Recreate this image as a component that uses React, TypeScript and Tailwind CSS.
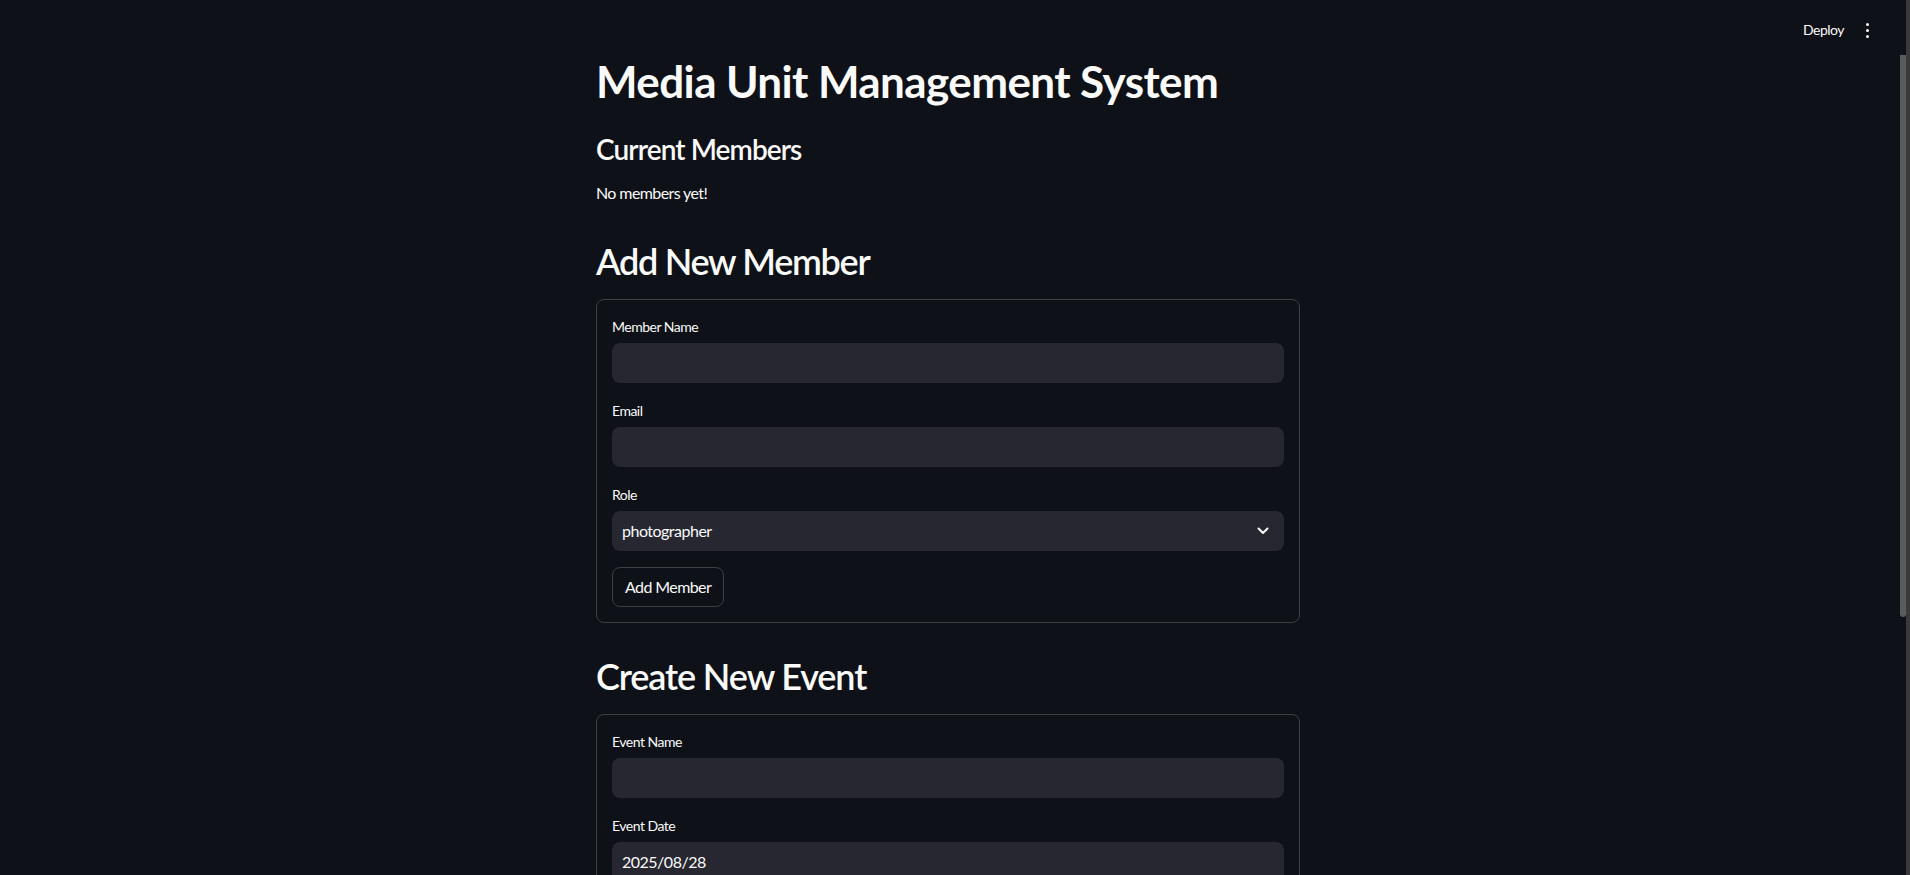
import React from "react";

const font = { fontFamily: "Lato, 'Noto Sans', sans-serif" };

function Field({ label, value, select }: { label: string; value?: string; select?: boolean }) {
  return (
    <div>
      <label className="mb-1 flex h-6 items-center text-sm tracking-[-0.5px]">{label}</label>
      <div className="flex h-10 items-center justify-between rounded-lg bg-[#262730] pl-[10px] pr-[15px] text-base tracking-[-0.5px]">
        <span>{value}</span>
        {select && (
          <svg width="12" height="8" viewBox="0 0 12 8" fill="none">
            <path d="M1.5 1.5 6 6l4.5-4.5" stroke="#fafafa" strokeWidth="2" strokeLinecap="round" strokeLinejoin="round" />
          </svg>
        )}
      </div>
    </div>
  );
}

export default function App() {
  return (
    <div className="relative h-[875px] overflow-hidden bg-[#0e1117] text-[#fafafa]" style={font}>
      {/* header overlay */}
      <div className="absolute top-0 right-[14px] flex h-[60px] items-center gap-[22px] pr-[27px]">
        <span className="text-sm tracking-[-0.5px]">Deploy</span>
        <div className="flex flex-col items-center gap-[3px]">
          <span className="h-[3px] w-[3px] rounded-full bg-[#fafafa]" />
          <span className="h-[3px] w-[3px] rounded-full bg-[#fafafa]" />
          <span className="h-[3px] w-[3px] rounded-full bg-[#fafafa]" />
        </div>
      </div>

      {/* scrollbar */}
      <div className="absolute right-0 top-0 h-full w-[4px] bg-[#3a3a3a]" />
      <div className="absolute right-[4px] top-[55px] h-[562px] w-[6px] rounded-b bg-[#5b5c60]" />

      <div className="flex justify-center pr-[14px]">
        <main className="w-[736px] px-4 pt-[55px]">
          <h1 className="text-[44px] font-bold leading-[53px] tracking-[-0.6px]">Media Unit Management System</h1>
          <h3 className="mt-6 text-[28px] font-semibold leading-[34px] tracking-[-0.9px]">Current Members</h3>
          <p className="mt-[15px] text-base leading-6 tracking-[-0.6px]">No members yet!</p>

          <h2 className="mt-[34px] text-[36px] font-semibold leading-[44px] tracking-[-1.3px]">Add New Member</h2>
          <div className="mt-4 flex flex-col gap-4 rounded-lg border border-[#3d4044] p-[15px]">
            <Field label="Member Name" />
            <Field label="Email" />
            <Field label="Role" value="photographer" select />
            <div>
              <button className="h-10 rounded-lg border border-[#3d4044] bg-[#0e1117] px-3 text-base tracking-[-0.6px]">
                Add Member
              </button>
            </div>
          </div>

          <h2 className="mt-[31px] text-[36px] font-semibold leading-[44px] tracking-[-1.1px]">Create New Event</h2>
          <div className="mt-4 flex flex-col gap-4 rounded-lg border border-[#3d4044] p-[15px]">
            <Field label="Event Name" />
            <Field label="Event Date" value="2025/08/28" />
            <Field label="Assigned Members" />
          </div>
        </main>
      </div>
    </div>
  );
}
